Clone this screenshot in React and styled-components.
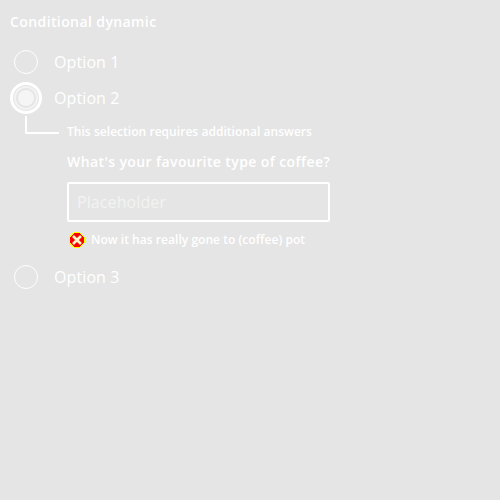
import React from 'react';
import styled, { createGlobalStyle } from 'styled-components';

const Global = createGlobalStyle`
  *, *::before, *::after { box-sizing: border-box; }
  body {
    margin: 0;
    background: #e5e5e5;
    color: #fff;
    font-family: "Open Sans", sans-serif;
  }
`;
const Page = styled.main`
  display: flex;
  flex-direction: column;
  min-height: 500px;
  padding: 12px 10px;
`;
const Heading = styled.h1`
  margin: 0 0 12px;
  font-size: 14px;
  line-height: 20px;
  font-weight: 600;
  letter-spacing: 0.4px;
`;
const Option = styled.label`
  display: flex;
  align-items: center;
  gap: 12px;
  height: 36px;
  font-size: 16px;
  letter-spacing: 0.1px;
`;
const Radio = styled.svg`
  width: 32px;
  height: 32px;
  fill: none;
  stroke: #fff;
`;
const Conditional = styled.section`
  display: flex;
  height: 143px;
`;
const Elbow = styled.div`
  width: 34px;
  height: 18px;
  margin: 0 8px 0 15px;
  border: solid #fff;
  border-width: 0 0 2px 2px;
  border-bottom-left-radius: 2px;
`;
const Answers = styled.div`
  width: 263px;
  padding-top: 8px;
`;
const Hint = styled.p`
  margin: 0;
  font-size: 12px;
  line-height: 16px;
  font-weight: 600;
  letter-spacing: 0.04px;
`;
const Question = styled.label`
  display: block;
  margin: 12px 0 10px;
  font-size: 14px;
  line-height: 20px;
  font-weight: 600;
  letter-spacing: 0.4px;
  white-space: nowrap;
`;
const Input = styled.input`
  display: block;
  width: 263px;
  height: 40px;
  padding: 0 8px;
  border: 2px solid #fff;
  border-radius: 2px;
  background: transparent;
  font: 16px "Open Sans", sans-serif;
  letter-spacing: 0.1px;
  &::placeholder { color: #f3f3f3; opacity: 1; }
`;
const ErrorRow = styled.div`
  display: flex;
  align-items: center;
  gap: 6px;
  margin: 10px 0 0 2px;
  font-size: 12px;
  line-height: 16px;
  font-weight: 600;
  letter-spacing: 0.04px;
`;
const ErrorIcon = styled.svg`
  width: 16px;
  height: 16px;
`;

function Choice({ label, checked }) {
  return (
    <Option>
      <Radio viewBox="0 0 32 32">
        {checked ? (
          <>
            <circle cx="16" cy="16" r="14.5" strokeWidth="3" />
            <circle cx="16" cy="16" r="11" stroke="#f3f3f3" strokeWidth="2" />
            <circle cx="16" cy="16" r="8" fill="#f5f5f5" stroke="none" />
          </>
        ) : <circle cx="16" cy="16" r="11.5" />}
      </Radio>
      {label}
    </Option>
  );
}

export default function App() {
  return (
    <Page>
      <Global />
      <Heading>Conditional dynamic</Heading>
      <Choice label="Option 1" />
      <Choice label="Option 2" checked />
      <Conditional>
        <Elbow />
        <Answers>
          <Hint>This selection requires additional answers</Hint>
          <Question htmlFor="coffee">What's your favourite type of coffee?</Question>
          <Input id="coffee" placeholder="Placeholder" />
          <ErrorRow>
            <ErrorIcon viewBox="0 0 16 16" shapeRendering="crispEdges">
              <path fill="#ff0" d="M5 0h6v1h2v2h2v2h1v6h-1v2h-2v2h-2v1H5v-1H3v-2H1v-2H0V5h1V3h2V1h2z" />
              <path fill="#f00" d="M5 1h6v1h1v1h1v1h1v1h1v6h-1v1h-1v1h-1v1h-1v1H5v-1H4v-1H3v-1H2v-1H1V5h1V4h1V3h1V2h1z" />
              <path stroke="#fff7c8" strokeWidth="2.6" shapeRendering="auto" d="M4 4l8 8m0-8l-8 8" />
            </ErrorIcon>
            <span>Now it has really gone to (coffee) pot</span>
          </ErrorRow>
        </Answers>
      </Conditional>
      <Choice label="Option 3" />
    </Page>
  );
}
